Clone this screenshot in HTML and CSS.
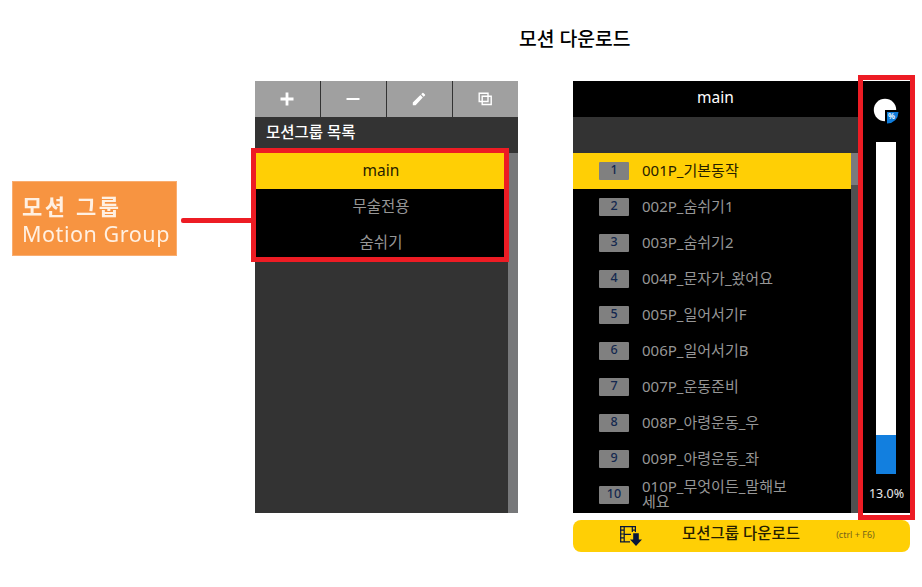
FILE: index.html
```html
<!DOCTYPE html>
<html lang="ko">
<head>
<meta charset="utf-8">
<title>모션 다운로드</title>
<link rel="stylesheet" href="styles.css">
</head>
<body>
<div class="page">
  <aside class="callout">
    <div class="callout-box">
      <div class="callout-ko">모션 그룹</div>
      <div class="callout-en">Motion Group</div>
    </div>
    <div class="callout-line"></div>
  </aside>

  <section class="groups">
    <div class="toolbar">
      <button class="tool"><svg width="16" height="16" viewBox="0 0 16 16"><path d="M8 1.5v13M1.5 8h13" stroke="#fff" stroke-width="2.8"/></svg></button>
      <button class="tool"><svg width="16" height="16" viewBox="0 0 16 16"><path d="M1.5 8h13" stroke="#fff" stroke-width="2"/></svg></button>
      <button class="tool"><svg width="16" height="16" viewBox="0 0 16 16"><path d="M1.8 14.2v-2.8L9.4 4l2.4 2.4L4.6 14.2zM10.2 3.2L11.4 2Q11.9 1.6 12.4 2L14 3.6Q14.4 4.1 14 4.6L12.7 5.8z" fill="#fff"/></svg></button>
      <button class="tool"><svg width="16" height="16" viewBox="0 0 16 16"><path d="M2.2 2.2h8.8v8.3H2.2zM5.2 5.2h9v8.3h-9z" fill="none" stroke="#fff" stroke-width="1.4"/></svg></button>
    </div>
    <h2 class="groups-title">모션그룹 목록</h2>
    <div class="groups-body">
      <ul class="group-list">
        <li class="selected">main</li>
        <li>무술전용</li>
        <li>숨쉬기</li>
      </ul>
      <div class="groups-scroll"></div>
      <div class="frame frame-groups"></div>
    </div>
  </section>

  <section class="download">
    <h1 class="title">모션 다운로드</h1>
    <div class="device">
      <div class="motions">
        <div class="motions-head">main</div>
        <div class="motions-sub"></div>
        <div class="motions-body">
          <ol class="motion-list">
            <li class="selected"><b>1</b><span>001P_기본동작</span></li>
            <li><b>2</b><span>002P_숨쉬기1</span></li>
            <li><b>3</b><span>003P_숨쉬기2</span></li>
            <li><b>4</b><span>004P_문자가_왔어요</span></li>
            <li><b>5</b><span>005P_일어서기F</span></li>
            <li><b>6</b><span>006P_일어서기B</span></li>
            <li><b>7</b><span>007P_운동준비</span></li>
            <li><b>8</b><span>008P_아령운동_우</span></li>
            <li><b>9</b><span>009P_아령운동_좌</span></li>
            <li class="wrapped"><b>10</b><span>010P_무엇이든_말해보<br>세요</span></li>
          </ol>
          <div class="motions-scroll"><div class="thumb"></div></div>
        </div>
      </div>
      <div class="usage">
        <svg class="pie" width="26" height="26" viewBox="0 0 26 26">
          <circle cx="12" cy="12" r="11.2" fill="#fff"/>
          <path d="M12 12h14v14H12z" fill="#000"/>
          <path d="M14 14h11.5Q24.8 24.8 14 25.5z" fill="#0f7cdb"/>
          <text x="18.6" y="21.4" text-anchor="middle" class="pie-text">%</text>
        </svg>
        <div class="meter"><div class="meter-fill"></div></div>
        <div class="percent">13.0%</div>
        <div class="frame frame-usage"></div>
      </div>
    </div>
    <button class="action">
      <svg class="film" width="24" height="22" viewBox="0 0 24 22">
        <path d="M1 1.7h16M1 16.8h10M1.7 1v16.5M5.2 1v16.5M13.3 1v6M16.4 1v6M5 9.4h7" fill="none" stroke="#07163a" stroke-width="1.2"/>
        <path d="M1 5.2h4M1 9h4M1 12.8h4M13 5.2h4" stroke="#07163a" stroke-width="1.2"/>
        <path d="M14.2 8.2h5.6v6.2h3.2L17 21l-6-6.6h3.2z" fill="#07163a"/>
      </svg>
      <span class="action-label">모션그룹 다운로드</span>
      <span class="action-key">(ctrl + F6)</span>
    </button>
  </section>
</div>
</body>
</html>
```
FILE: styles.css
```css
* { box-sizing: border-box; }
body {
  margin: 0;
  background: #fff;
  font-family: "Noto Sans", "Noto Sans CJK KR", sans-serif;
}
h1, h2, ul, ol { margin: 0; padding: 0; }
ul, ol { list-style: none; }
button { border: 0; padding: 0; font: inherit; }

.page {
  display: grid;
  grid-template-columns: 243px 263px 392px;
  padding-left: 12px;
  width: 922px;
  height: 587px;
  overflow: hidden;
}

/* Callout on the left */
.callout { display: flex; align-items: flex-start; padding-top: 181px; }
.callout-box {
  width: 165px;
  height: 75px;
  padding: 9px 0 0 9px;
  background: #f79441;
  border: 1px solid #f9ad70;
  color: #fff0e2;
  white-space: nowrap;
}
.callout-ko { font-size: 22px; line-height: 30px; font-weight: 700; letter-spacing: 2.6px; filter: blur(.5px); }
.callout-en { margin-top: -2px; font-size: 21.5px; line-height: 30px; letter-spacing: .55px; filter: blur(.5px); }
.callout-line { width: 72px; height: 5px; margin: 37px 0 0 4px; background: #ed1c24; border-radius: 2px 0 0 2px; }

/* Group list */
.groups { padding-top: 81px; width: 263px; }
.toolbar { display: grid; grid-template-columns: 65px 65px 65px 65px; gap: 1px; height: 36px; background: #a0a0a0; }
.tool { display: flex; align-items: center; justify-content: center; padding-right: 1px; background: #a0a0a0; box-shadow: 1px 0 #333; }
.tool:last-child { box-shadow: none; }
.groups-title { height: 36px; padding-left: 11px; background: #333; color: #fff; font-size: 15.5px; font-weight: 500; line-height: 31px; }
.groups-body { position: relative; display: flex; height: 360px; background: #333; }
.group-list { width: 253px; }
.group-list li { height: 36px; padding-right: 1px; background: #000; color: #969696; font-size: 15.5px; line-height: 34px; text-align: center; }
.group-list .selected { background: #ffcf05; color: #262000; }
.groups-scroll { width: 10px; background: #77787a; }

.frame { position: absolute; border: 5px solid #ed1c24; }
.frame-groups { left: -4px; top: -5px; width: 258px; height: 114px; }

/* Motion list */
.download { padding-left: 55px; }
.title { height: 81px; margin-left: -54px; padding-top: 24px; font-size: 19.3px; font-weight: 500; line-height: 29px; color: #000; }
.device { display: flex; height: 432px; background: #000; }
.motions { width: 285px; }
.motions-head { height: 36px; color: #fff; font-size: 15.5px; line-height: 32px; text-align: center; }
.motions-sub { height: 36px; background: #333; }
.motions-body { display: flex; height: 360px; }
.motion-list { width: 278px; }
.motion-list li { display: flex; align-items: center; height: 36px; padding-left: 26px; color: #969696; }
.motion-list b { width: 30px; height: 18px; background: #808080; border-radius: 1px; color: #14284f; font-size: 12.5px; font-weight: 500; line-height: 16px; text-align: center; }
.motion-list span { margin-left: 13px; font-size: 15px; line-height: 34px; height: 36px; white-space: nowrap; }
.motion-list .selected { background: #ffcf05; color: #262000; }
.motion-list .wrapped span { line-height: 15px; padding-top: 2px; }
.motions-scroll { width: 7px; background: #505050; }
.thumb { height: 32px; background: #7b7b7d; }

/* Memory usage */
.usage { position: relative; display: flex; flex-direction: column; align-items: center; width: 52px; padding-left: 5px; }
.pie { margin: 17px 0 0 -1px; }
.pie-text { font-size: 8px; font-weight: 600; fill: #fff; }
.meter { display: flex; align-items: flex-end; width: 20px; height: 332px; margin: 18px 1px 0 0; background: #fff; }
.meter-fill { width: 20px; height: 39px; background: #127fdf; }
.percent { margin-top: 11px; color: #e8e8e8; font-size: 12.5px; line-height: 18px; }
.frame-usage { left: 0; top: -6px; width: 57px; height: 445px; }

/* Download button */
.action { display: flex; align-items: center; width: 337px; height: 32px; margin-top: 7px; background: #ffcf05; border-radius: 8px; color: #262000; }
.film { margin-left: 46px; flex: none; }
.action-label { margin-left: 39px; margin-top: -7px; font-size: 15.5px; font-weight: 500; white-space: nowrap; }
.action-key { margin-left: 36px; margin-top: -4px; font-size: 9px; color: #75641a; white-space: nowrap; }
```
